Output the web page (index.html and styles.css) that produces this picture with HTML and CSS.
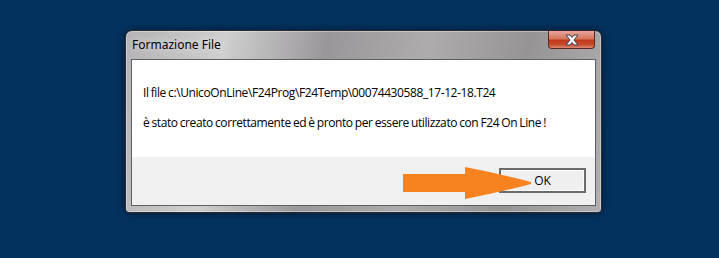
FILE: index.html
```html
<!DOCTYPE html>
<html>
<head>
<meta charset="utf-8">
<link rel="stylesheet" href="styles.css">
</head>
<body>
<div class="window">
  <div class="titlebar">
    <span class="title">Formazione File</span>
    <div class="close">
      <svg width="20" height="12" viewBox="0 0 20 12">
        <path d="M4 1 L8 1 L10 3.5 L12 1 L16 1 L12 6 L16 11 L12 11 L10 8.5 L8 11 L4 11 L8 6 Z" fill="#f4f4f8" stroke="#3a3f55" stroke-width="1" stroke-linejoin="round"/>
      </svg>
    </div>
  </div>
  <div class="client">
    <div class="message">
      <p class="line">Il file c:\UnicoOnLine\F24Prog\F24Temp\00074430588_17-12-18.T24</p>
      <p class="line">è stato creato correttamente ed è pronto per essere utilizzato con F24 On Line !</p>
    </div>
    <div class="footer">
      <button class="ok">OK</button>
    </div>
  </div>
</div>
<svg class="arrow" width="140" height="40" viewBox="0 0 140 40">
  <path d="M2 8 L64 8 L64 1 Q100 8 130 16 L130 18 Q100 26 64 33 L64 26 L2 26 Z" fill="#f78220"/>
</svg>
</body>
</html>
```
FILE: styles.css
```css
html, body {
  margin: 0;
  padding: 0;
}
body {
  background: #04325f;
  width: 719px;
  height: 258px;
  overflow: hidden;
  padding: 30px 0 0 125px;
  box-sizing: border-box;
  position: relative;
  font-family: "Noto Sans", "Open Sans", sans-serif;
}
.window {
  width: 477px;
  height: 183px;
  box-sizing: border-box;
  border: 1px solid #2b2b30;
  border-radius: 7px 7px 4px 4px;
  background: linear-gradient(100deg, #b4b2b4 0%, #cfcfcf 20%, #9a979a 40%, #adabac 60%, #979496 80%, #b0aeb0 100%);
  padding: 0 5px 6px 5px;
  display: flex;
  flex-direction: column;
  box-shadow: 0 0 8px rgba(0,0,0,0.5), inset 0 0 0 1px rgba(255,255,255,0.35);
}
.titlebar {
  height: 28px;
  display: flex;
  justify-content: space-between;
  align-items: flex-start;
}
.title {
  font-size: 12px;
  color: #000;
  margin-top: 5px;
  margin-left: 1px;
  text-shadow: 0 0 8px rgba(255,255,255,0.9);
}
.close {
  width: 47px;
  height: 18px;
  box-sizing: border-box;
  border: 1px solid #5a2a22;
  border-top: none;
  border-radius: 0 0 4px 4px;
  background: linear-gradient(180deg, #e8a79a 0%, #d6765f 45%, #c0391b 55%, #c64a2c 80%, #dc8a72 100%);
  display: flex;
  justify-content: center;
  align-items: center;
  margin-right: 1px;
}
.client {
  flex: 1;
  border: 1px solid #5f5f63;
  display: flex;
  flex-direction: column;
  background: #f0f0f0;
}
.message {
  background: #fff;
  height: 97px;
  padding: 24px 0 0 11px;
  box-sizing: border-box;
}
.line {
  margin: 0 0 15px 0;
  font-size: 12px;
  line-height: 18px;
  color: #000;
  font-family: "Open Sans", "Noto Sans", sans-serif;
  letter-spacing: -0.4px;
  word-spacing: -0.6px;
}
.line + .line {
  margin-top: -3px;
}
.footer {
  flex: 1;
  display: flex;
  justify-content: flex-end;
  align-items: flex-start;
  padding: 11px 9px 0 0;
}
.ok {
  width: 87px;
  height: 25px;
  border: 2px solid #6b6b6b;
  background: #efefef;
  font-family: "Open Sans", "Noto Sans", sans-serif;
  font-size: 12px;
  color: #000;
  padding: 0;
  box-shadow: inset 0 0 0 1px #fbfbfb;
}
.arrow {
  position: absolute;
  left: 401px;
  top: 166px;
}
```
